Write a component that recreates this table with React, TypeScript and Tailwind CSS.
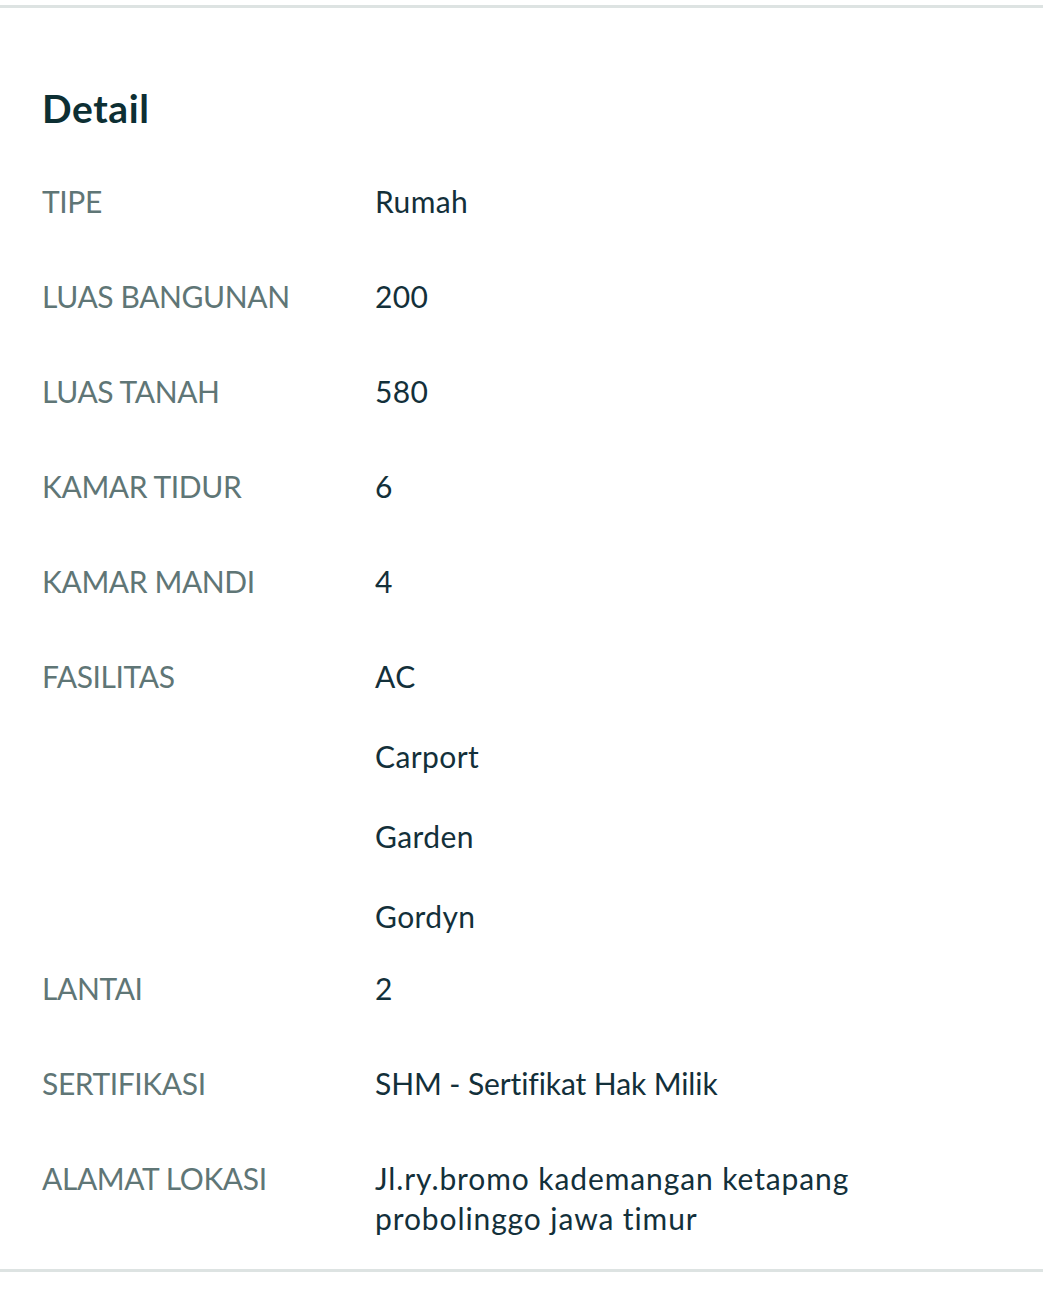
import React from "react";

const rows: { label: string; values: string[]; vcls?: string }[] = [
  { label: "TIPE", values: ["Rumah"] },
  { label: "LUAS BANGUNAN", values: ["200"] },
  { label: "LUAS TANAH", values: ["580"] },
  { label: "KAMAR TIDUR", values: ["6"] },
  { label: "KAMAR MANDI", values: ["4"] },
  { label: "FASILITAS", values: ["AC", "Carport", "Garden", "Gordyn"] },
  { label: "LANTAI", values: ["2"] },
  { label: "SERTIFIKASI", values: ["SHM - Sertifikat Hak Milik"], vcls: "tracking-[-0.1px]" },
  {
    label: "ALAMAT LOKASI",
    values: ["Jl.ry.bromo kademangan ketapang probolinggo jawa timur"],
    vcls: "tracking-[0.9px]",
  },
];

export default function App() {
  return (
    <div
      className="w-[1043px] h-[1290px] bg-white pt-[5px]"
      style={{ fontFamily: "Lato, 'Open Sans', sans-serif" }}
    >
      <section className="border-t-[3px] border-b-[3px] border-[#dde3e2] px-[42px]">
        <h2 className="pt-[76px] text-[39px] leading-[48px] font-bold text-[#0d2f33] tracking-[0.6px]">
          Detail
        </h2>
        <div className="pt-[26px]">
          {rows.map((r, i) => {
            const isFas = r.label === "FASILITAS";
            const isLast = i === rows.length - 1;
            return (
              <div
                key={r.label}
                className={
                  "flex pt-[23px] " +
                  (isFas ? "pb-[9px]" : isLast ? "pb-[31px]" : "pb-[32px]")
                }
              >
                <div className="w-[333px] shrink-0 text-[30px] leading-[40px] tracking-[-0.4px] text-[#5f7676]">
                  {r.label}
                </div>
                <div
                  className={
                    "flex flex-col gap-[40px] w-[520px] text-[30px] leading-[40px] text-[#13303a] " +
                    (r.vcls ?? "tracking-[0.4px]")
                  }
                >
                  {r.values.map((v) => (
                    <div key={v}>{v}</div>
                  ))}
                </div>
              </div>
            );
          })}
        </div>
      </section>
    </div>
  );
}
